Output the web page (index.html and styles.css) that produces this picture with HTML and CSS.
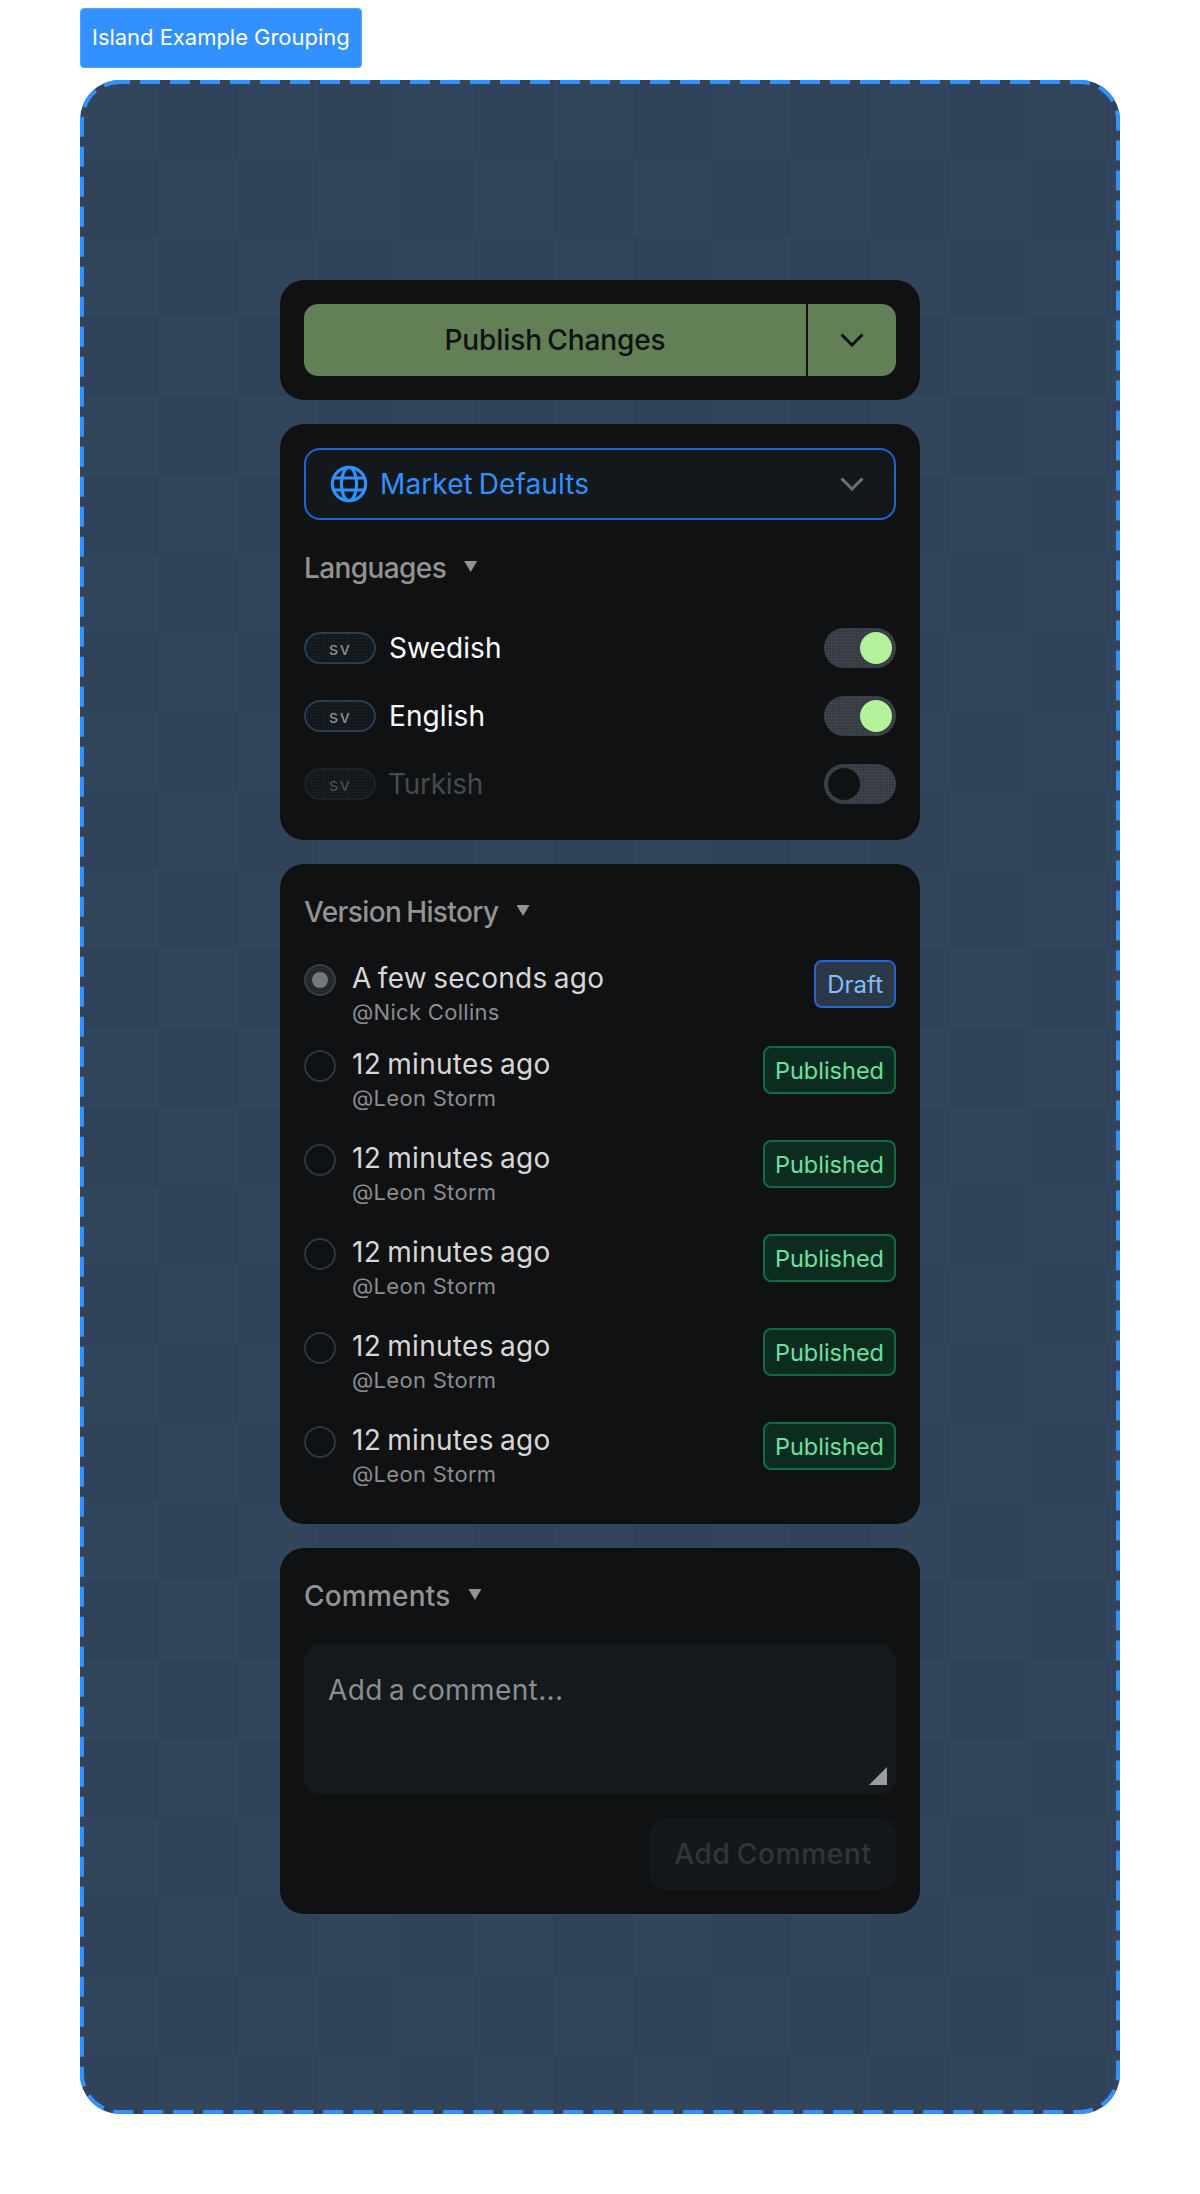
FILE: index.html
```html
<!DOCTYPE html>
<html lang="en">
<head>
  <meta charset="UTF-8" />
  <title>Island Example Grouping</title>
  <link rel="stylesheet" href="styles.css">
</head>
<body>

  <div class="story-label">Island Example Grouping</div>

  <div class="canvas">
    <svg class="canvas-dash" width="1040" height="2034" viewBox="0 0 1040 2034">
      <rect x="2" y="2" width="1036" height="2030" rx="38" fill="none" stroke="#3291ff" stroke-width="4" stroke-dasharray="20 10" stroke-dashoffset="10" />
    </svg>

    <div class="stack">
      <!-- Publish -->
      <section class="island">
        <div class="publish">
          <button class="publish-main">Publish Changes</button>
          <button class="publish-more">
            <svg width="24" height="14" viewBox="0 0 24 14"><polyline points="1.5,1.5 12,12 22.5,1.5" fill="none" stroke="#0f1113" stroke-width="3" /></svg>
          </button>
        </div>
      </section>

      <!-- Languages -->
      <section class="island island-langs">
        <div class="market">
          <svg class="globe" width="38" height="38" viewBox="0 0 24 24" fill="none" stroke="#3291ff" stroke-width="2">
            <circle cx="12" cy="12" r="10.5" />
            <ellipse cx="12" cy="12" rx="4.8" ry="10.5" />
            <path d="M2.4 8.2h19.2M2.4 15.8h19.2" />
          </svg>
          <span class="market-name">Market Defaults</span>
          <svg width="24" height="14" viewBox="0 0 24 14"><polyline points="1.5,1.5 12,12 22.5,1.5" fill="none" stroke="#6f6f6f" stroke-width="3" /></svg>
        </div>

        <h2 class="section-title title-gap">Languages <i class="caret"></i></h2>

        <div class="lang-list">
          <div class="lang">
            <span class="code">sv</span>
            <span class="lang-name">Swedish</span>
            <span class="toggle on"><i></i></span>
          </div>
          <div class="lang">
            <span class="code">sv</span>
            <span class="lang-name">English</span>
            <span class="toggle on"><i></i></span>
          </div>
          <div class="lang off">
            <span class="code">sv</span>
            <span class="lang-name">Turkish</span>
            <span class="toggle"><i></i></span>
          </div>
        </div>
      </section>

      <!-- Version history -->
      <section class="island island-history">
        <h2 class="section-title">Version History <i class="caret"></i></h2>

        <div class="versions">
          <div class="version first">
            <span class="radio checked"></span>
            <div class="version-text">
              <div class="version-time">A few seconds ago</div>
              <div class="version-user">@Nick Collins</div>
            </div>
            <span class="status draft">Draft</span>
          </div>
          <div class="version">
            <span class="radio"></span>
            <div class="version-text">
              <div class="version-time">12 minutes ago</div>
              <div class="version-user">@Leon Storm</div>
            </div>
            <span class="status published">Published</span>
          </div>
          <div class="version">
            <span class="radio"></span>
            <div class="version-text">
              <div class="version-time">12 minutes ago</div>
              <div class="version-user">@Leon Storm</div>
            </div>
            <span class="status published">Published</span>
          </div>
          <div class="version">
            <span class="radio"></span>
            <div class="version-text">
              <div class="version-time">12 minutes ago</div>
              <div class="version-user">@Leon Storm</div>
            </div>
            <span class="status published">Published</span>
          </div>
          <div class="version">
            <span class="radio"></span>
            <div class="version-text">
              <div class="version-time">12 minutes ago</div>
              <div class="version-user">@Leon Storm</div>
            </div>
            <span class="status published">Published</span>
          </div>
          <div class="version">
            <span class="radio"></span>
            <div class="version-text">
              <div class="version-time">12 minutes ago</div>
              <div class="version-user">@Leon Storm</div>
            </div>
            <span class="status published">Published</span>
          </div>
        </div>
      </section>

      <!-- Comments -->
      <section class="island">
        <h2 class="section-title title-wide">Comments <i class="caret"></i></h2>
        <div class="comment-box">
          <span class="comment-placeholder">Add a comment...</span>
          <i class="resize-grip"></i>
        </div>
        <div class="comment-actions">
          <button class="comment-btn">Add Comment</button>
        </div>
      </section>
    </div>
  </div>

</body>
</html>
```

FILE: styles.css
```css
body {
  margin: 0;
  background-color: white;
  font-family: Inter, "Liberation Sans", sans-serif;
}

.story-label {
  width: max-content;
  height: 60px;
  margin: 8px 0 0 80px;
  padding: 0 11px 3px;
  box-sizing: border-box;
  display: flex;
  align-items: center;
  background-color: #3291ff;
  border: 1px solid #52a2ff;
  border-radius: 4px;
  color: white;
  font-size: 22px;
  letter-spacing: -0.03px;
}

/* Dashed canvas */
.canvas {
  position: relative;
  width: 1040px;
  height: 2034px;
  margin: 12px 0 0 80px;
  display: flex;
  align-items: center;
  justify-content: center;
  border-radius: 40px;
  background: repeating-conic-gradient(#30435a 0 25%, #31465c 0 50%) 0 0 / 158px 158px;
}

.canvas-dash {
  position: absolute;
  top: 0;
  left: 0;
}

.stack {
  width: 640px;
  display: flex;
  flex-direction: column;
  gap: 24px;
}

.island {
  padding: 24px;
  background-color: #0f1113;
  border-radius: 24px;
}

.island-langs {
  padding-bottom: 22px;
}

.island-history {
  padding-bottom: 34px;
}

button {
  font-family: inherit;
  border: none;
  padding: 0;
}

/* Publish */
.publish {
  display: flex;
  height: 72px;
}

.publish-main {
  flex: 1;
  background-color: #627f55;
  border-radius: 14px 0 0 14px;
  color: #0f1113;
  font-size: 28px;
  font-weight: 500;
  letter-spacing: -0.1px;
  word-spacing: -2px;
}

.publish-more {
  width: 90px;
  display: flex;
  align-items: center;
  justify-content: center;
  background-color: #627f55;
  border-left: 2px solid #0f1113;
  border-radius: 0 14px 14px 0;
}

/* Market select */
.market {
  height: 72px;
  box-sizing: border-box;
  padding: 0 30px 0 24px;
  display: flex;
  align-items: center;
  gap: 12px;
  background-color: #13181b;
  border: 2px solid #1f66d1;
  border-radius: 16px;
}

.market-name {
  flex: 1;
  color: #3291ff;
  font-size: 28px;
  letter-spacing: 0.1px;
  word-spacing: -2px;
}

.section-title {
  height: 48px;
  margin: 0;
  display: flex;
  align-items: center;
  gap: 18px;
  color: #939393;
  font-size: 28px;
  font-weight: 500;
  letter-spacing: -0.6px;
  word-spacing: -2px;
}

.title-gap {
  margin-top: 24px;
}

.title-wide {
  letter-spacing: 0.2px;
}

.caret {
  width: 13px;
  height: 11px;
  margin-top: -3px;
  background-color: #939393;
  clip-path: polygon(0 0, 100% 0, 50% 100%);
}

/* Languages */
.lang-list {
  margin-top: 22px;
}

.lang {
  height: 68px;
  display: flex;
  align-items: center;
  gap: 13px;
}

.code {
  width: 72px;
  height: 32px;
  box-sizing: border-box;
  display: flex;
  align-items: center;
  justify-content: center;
  background: radial-gradient(#242a30 0.6px, #13181c 0.7px) 0 0 / 3px 3px;
  border: 2px solid #2b3b50;
  border-radius: 16px;
  color: #8f9396;
  font-size: 18px;
  letter-spacing: 1.5px;
}

.lang-name {
  flex: 1;
  color: white;
  font-size: 28px;
  letter-spacing: 0.1px;
}

.lang.off .code {
  border-color: #1c2227;
  color: #4a4f53;
}

.lang.off .lang-name {
  margin-left: -1px;
  color: #454a4f;
  letter-spacing: -0.3px;
}

.toggle {
  width: 72px;
  height: 40px;
  box-sizing: border-box;
  padding: 4px;
  display: flex;
  background: radial-gradient(#4d5259 0.6px, #383d45 0.7px) 0 0 / 3px 3px;
  border-radius: 20px;
}

.toggle i {
  width: 32px;
  height: 32px;
  background-color: #0f1113;
  border-radius: 50%;
}

.toggle.on {
  justify-content: flex-end;
}

.toggle.on i {
  background-color: #b4f19b;
}

/* Version history */
.versions {
  margin-top: 24px;
  display: flex;
  flex-direction: column;
  gap: 26px;
}

.version {
  height: 68px;
  display: flex;
  align-items: flex-start;
  gap: 16px;
}

.version.first {
  margin-bottom: -8px;
}

.radio {
  width: 32px;
  height: 32px;
  margin-top: 4px;
  box-sizing: border-box;
  display: flex;
  align-items: center;
  justify-content: center;
  flex-shrink: 0;
  border: 2px solid #2e3640;
  border-radius: 50%;
}

.radio.checked {
  background-color: #25292e;
  border-color: #343d49;
}

.radio.checked::after {
  content: "";
  width: 16px;
  height: 16px;
  background-color: #74777b;
  border-radius: 50%;
}

.version-text {
  flex: 1;
}

.version-time {
  height: 36px;
  line-height: 36px;
  color: #d6d7d8;
  font-size: 28px;
  letter-spacing: 0.3px;
  word-spacing: -2px;
}

.version-user {
  height: 32px;
  line-height: 32px;
  color: #8a8c8e;
  font-size: 22px;
  letter-spacing: 0.3px;
}

.status {
  height: 48px;
  box-sizing: border-box;
  display: flex;
  align-items: center;
  border-radius: 8px;
}

.status.draft {
  padding: 0 11px;
  background-color: #2b3848;
  border: 2px solid #1f66d1;
  color: #84bcff;
  font-size: 24px;
}

.status.published {
  padding: 0 10px;
  background-color: #0d2c20;
  border: 2px solid #0f6b45;
  color: #6ee0a3;
  font-size: 23.5px;
}

/* Comments */
.comment-box {
  position: relative;
  height: 150px;
  margin-top: 24px;
  box-sizing: border-box;
  padding: 28px 24px;
  background-color: #14191c;
  border-radius: 16px;
}

.comment-placeholder {
  display: block;
  line-height: 36px;
  color: #8a8e90;
  font-size: 28px;
  letter-spacing: 0.4px;
  word-spacing: -2px;
}

.resize-grip {
  position: absolute;
  right: 9px;
  bottom: 9px;
  width: 18px;
  height: 18px;
  background-color: #9c9c9c;
  clip-path: polygon(100% 0, 100% 100%, 0 100%);
}

.comment-actions {
  margin-top: 24px;
  display: flex;
  justify-content: flex-end;
}

.comment-btn {
  width: 246px;
  height: 72px;
  background-color: #14181b;
  border-radius: 16px;
  color: #2f353d;
  font-size: 28px;
  font-weight: 500;
  letter-spacing: 0.7px;
  word-spacing: -2px;
}
```
